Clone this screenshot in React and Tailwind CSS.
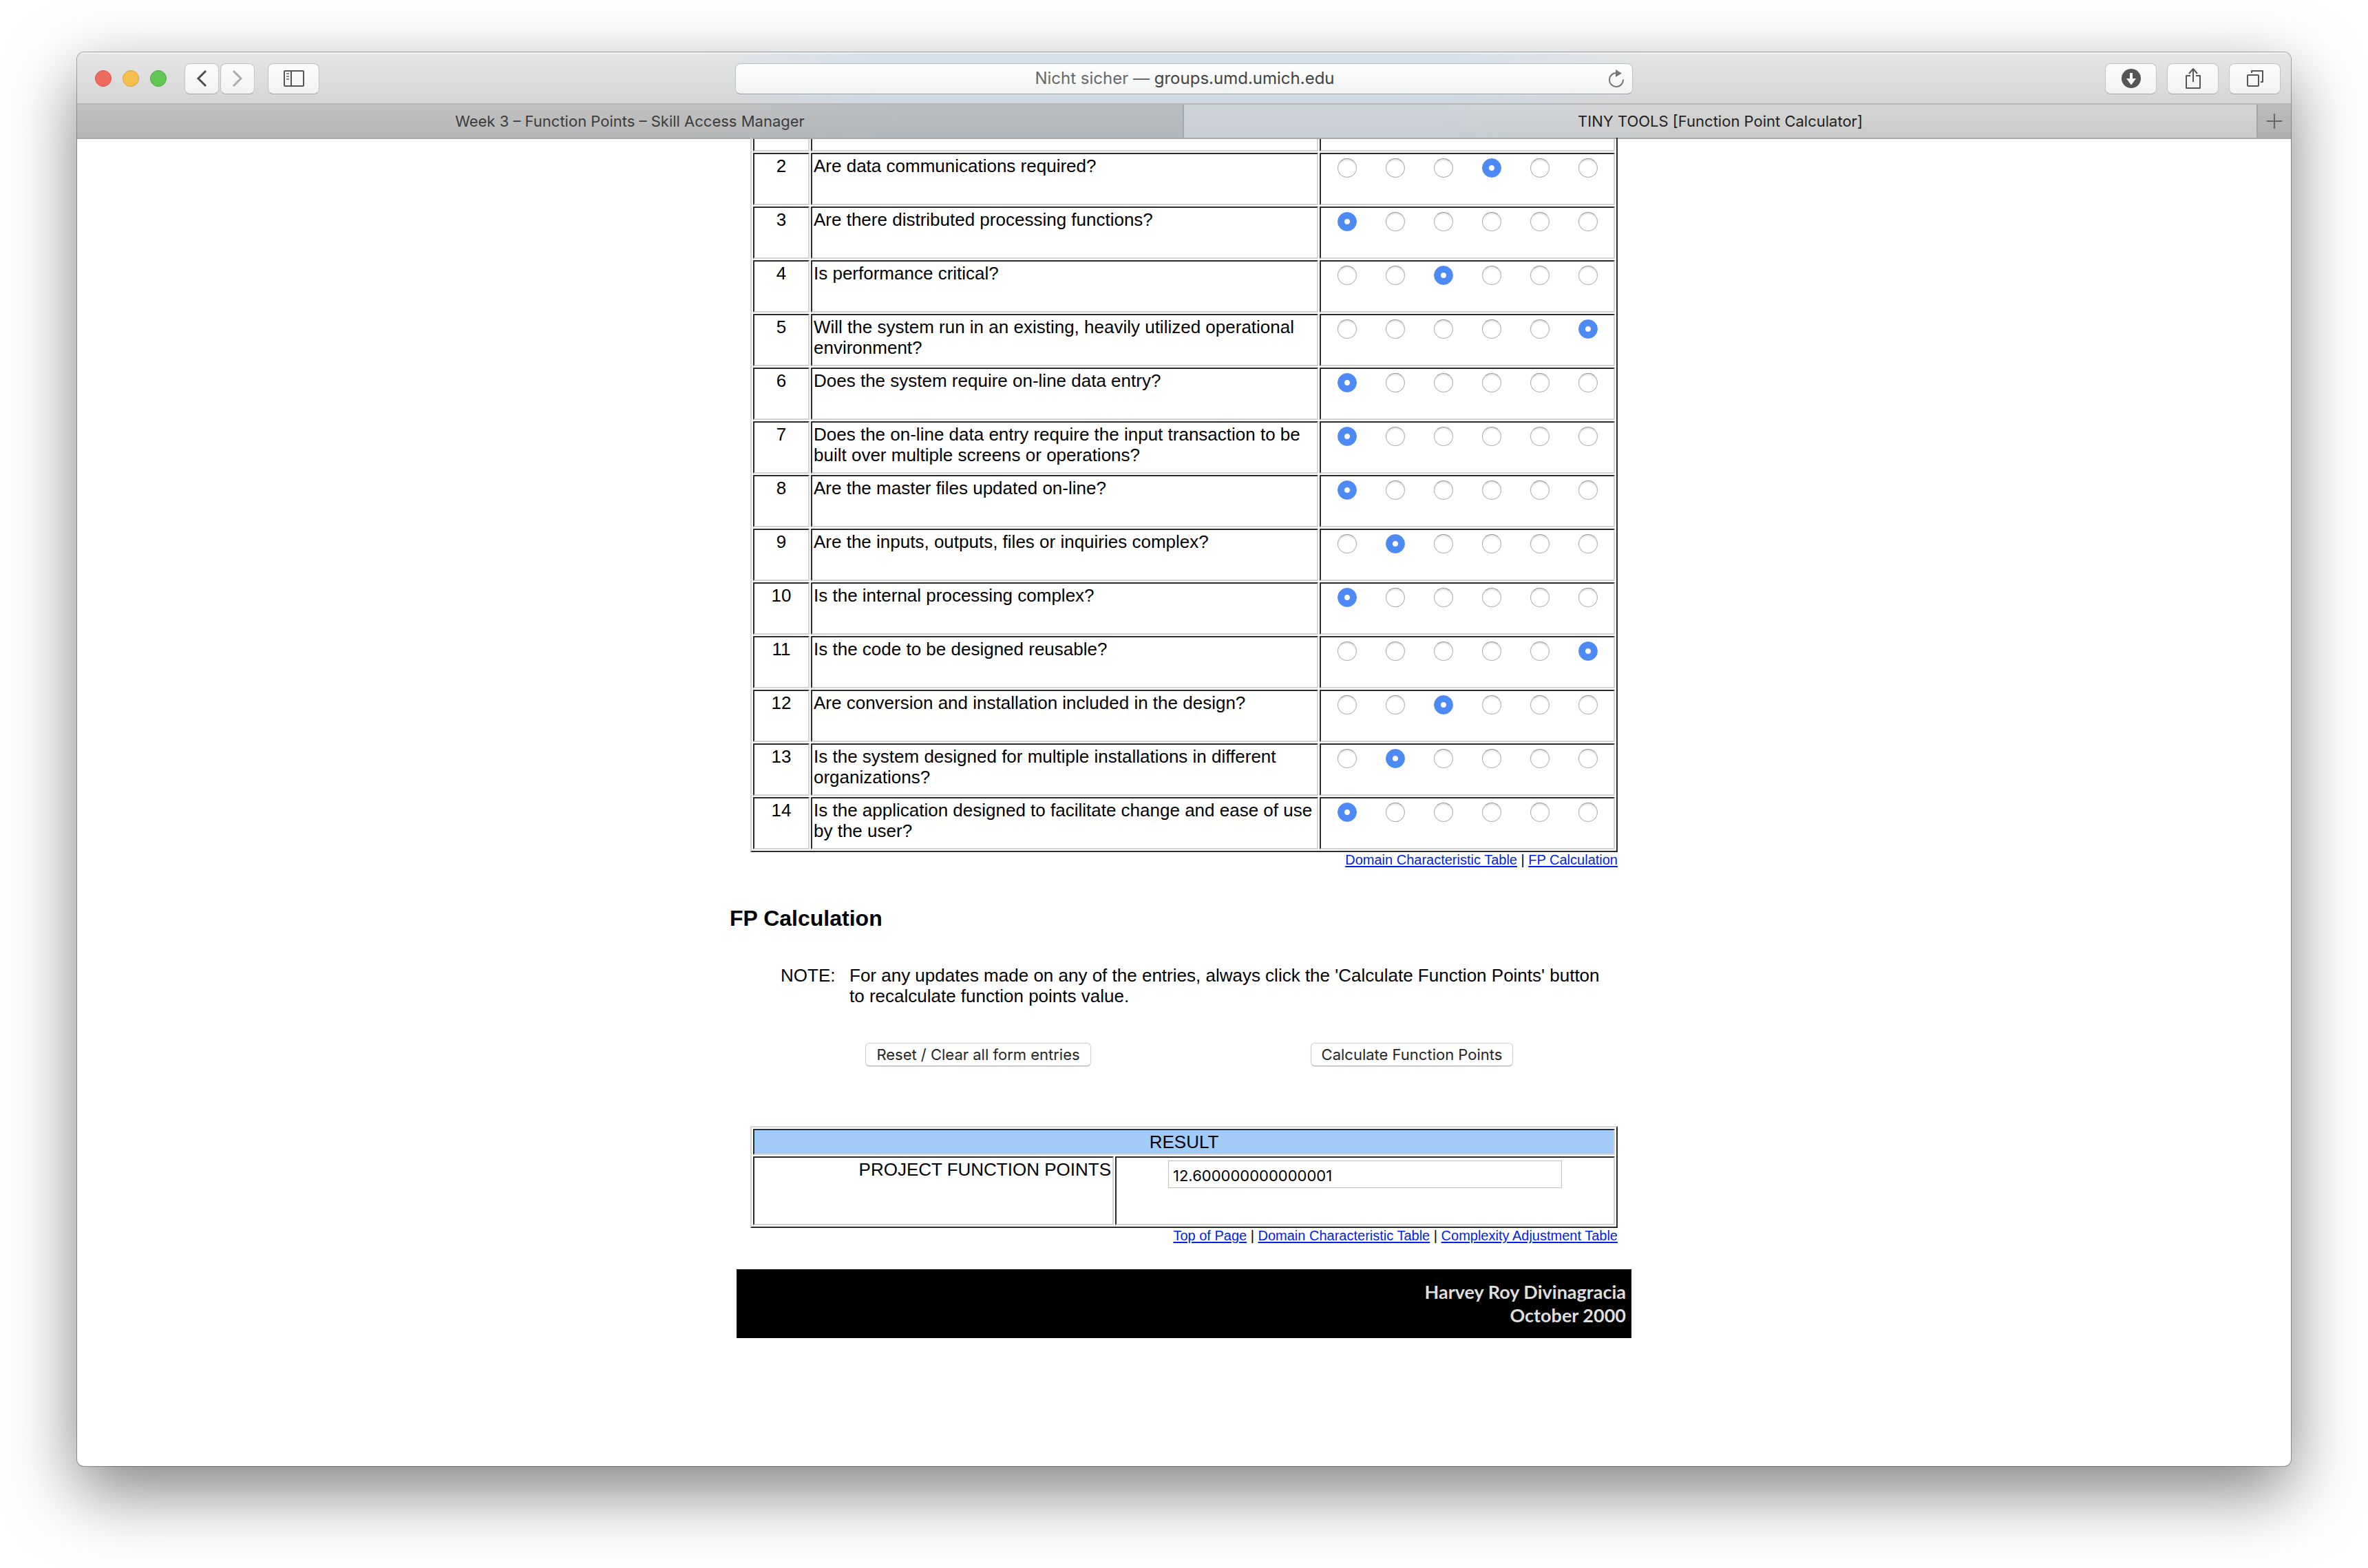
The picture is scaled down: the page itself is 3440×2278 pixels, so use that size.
const questions = [
  [2, 'Are data communications required?', 3],
  [3, 'Are there distributed processing functions?', 0],
  [4, 'Is performance critical?', 2],
  [5, 'Will the system run in an existing, heavily utilized operational environment?', 5],
  [6, 'Does the system require on-line data entry?', 0],
  [7, 'Does the on-line data entry require the input transaction to be built over multiple screens or operations?', 0],
  [8, 'Are the master files updated on-line?', 0],
  [9, 'Are the inputs, outputs, files or inquiries complex?', 1],
  [10, 'Is the internal processing complex?', 0],
  [11, 'Is the code to be designed reusable?', 5],
  [12, 'Are conversion and installation included in the design?', 2],
  [13, 'Is the system designed for multiple installations in different organizations?', 1],
  [14, 'Is the application designed to facilitate change and ease of use by the user?', 0],
];

const cell =
  'border-2 border-t-[#2b2b2b] border-l-[#2b2b2b] border-r-[#d4d4d4] border-b-[#d4d4d4] p-0.5 align-top';
const clippedCell =
  'border-x-2 border-b-2 border-l-[#2b2b2b] border-r-[#d4d4d4] border-b-[#d4d4d4] p-0';
const toolButton =
  'flex h-[45px] items-center justify-center rounded-lg border border-[#c4c4c4] border-b-[#a8a8a8] bg-linear-to-b from-[#fcfcfc] to-[#f2f2f2] text-[#555]';
const formButton =
  "h-[34px] rounded-md border border-[#cfcfcf] border-b-[#b4b4b4] bg-white px-[15px] font-['Inter',sans-serif] text-[22px] leading-[30px] text-[#262626] shadow-[0_1px_1px_rgba(0,0,0,0.12)]";
const link = 'text-[#0022ee] underline underline-offset-2';

function Toolbar() {
  return (
    <header className="flex h-[76px] items-center border-b-2 border-[#b4b4b4] bg-[linear-gradient(90deg,transparent_28%,rgba(200,220,240,0.5)_36%,rgba(200,220,240,0.5)_62%,transparent_71%),linear-gradient(#e6e6e6,#d5d5d5)] px-[15px] pt-0.5 shadow-[inset_0_2px_0_rgba(255,255,255,0.5)]">
      <div className="flex flex-1 items-center">
        <div className="ml-[11px] flex gap-4">
          <button aria-label="Close" className="size-6 rounded-full border border-[#d9544a] bg-[#ee6a5f]" />
          <button aria-label="Minimize" className="size-6 rounded-full border border-[#dba03c] bg-[#f5bf4f]" />
          <button aria-label="Zoom" className="size-6 rounded-full border border-[#4fa73d] bg-[#62c655]" />
        </div>
        <div className="ml-[26px] flex gap-0.5">
          <button aria-label="Back" className={`${toolButton} w-[50px]`}>
            <svg width="16" height="26" viewBox="0 0 16 26" fill="none" stroke="#4c4c4c" strokeWidth="3">
              <path d="M14 2 3 13l11 11" />
            </svg>
          </button>
          <button aria-label="Forward" className={`${toolButton} w-[50px]`}>
            <svg width="16" height="26" viewBox="0 0 16 26" fill="none" stroke="#acacac" strokeWidth="3">
              <path d="m2 2 11 11L2 24" />
            </svg>
          </button>
        </div>
        <button aria-label="Show sidebar" className={`${toolButton} ml-[19px] w-[75px]`}>
          <svg width="30" height="24" viewBox="0 0 30 24" fill="none" stroke="#555" strokeWidth="2">
            <rect x="1" y="1" width="28" height="22" rx="1" />
            <path d="M11 1v22" />
            <path d="M4 5h4M4 9h4M4 13h4" stroke="#888" />
          </svg>
        </button>
      </div>
      <div className="flex h-[45px] w-[1304px] items-center rounded-lg border border-[#bcc4c8] border-b-[#9ca2a4] bg-linear-to-b from-[#fdfefe] to-[#f1f2f2] pr-3 pl-9">
        <div className="flex-1 text-center text-2xl text-[#696969]">
          Nicht sicher — <span className="text-[#444]">groups.umd.umich.edu</span>
        </div>
        <button aria-label="Reload">
          <svg width="22" height="26" viewBox="0 0 22 26" fill="none" stroke="#777" strokeWidth="2">
            <path d="M21 14.500A10 10 0 1 1 11 5" />
            <path d="m10 0 9 5.500-9 5.500z" fill="#777" stroke="none" />
          </svg>
        </button>
      </div>
      <div className="flex flex-1 justify-end gap-[15px]">
        <button aria-label="Downloads" className={`${toolButton} w-[75px]`}>
          <svg width="28" height="28" viewBox="0 0 28 28">
            <circle cx="14" cy="14" r="14" fill="#555" />
            <path d="M12 6h4v8h5l-7 9.500L7 14h5z" fill="#fff" />
          </svg>
        </button>
        <button aria-label="Share" className={`${toolButton} w-[75px]`}>
          <svg width="22" height="30" viewBox="0 0 22 30" fill="none" stroke="#555" strokeWidth="2" strokeLinejoin="round">
            <path d="M7 11H1v18h20V11h-6M11 20V1M5 8l6-7 6 7" />
          </svg>
        </button>
        <button aria-label="Show tabs" className={`${toolButton} w-[75px]`}>
          <svg width="24" height="24" viewBox="0 0 24 24" fill="none" stroke="#555" strokeWidth="2" strokeLinejoin="round">
            <rect x="1" y="7" width="16" height="16" rx="1" />
            <path d="M7 4V1h16v16h-3" />
          </svg>
        </button>
      </div>
    </header>
  );
}

function TabBar() {
  return (
    <nav className="flex h-[50px] border-b-2 border-[#a8a8a8] text-[22px]">
      <button className="w-1/2 border-r-2 border-[#a4a8aa] bg-[linear-gradient(90deg,transparent_55%,rgba(170,185,195,0.4)_75%),linear-gradient(#c1c1c1,#b6b6b6)] text-[#3c3c3c]">
        Week 3 – Function Points – Skill Access Manager
      </button>
      <button className="flex-1 bg-[linear-gradient(90deg,rgba(195,210,220,0.45)_24%,transparent_44%),linear-gradient(#d6d6d6,#cacaca)] text-[#222]">
        TINY TOOLS [Function Point Calculator]
      </button>
      <button aria-label="New tab" className="flex w-[50px] items-center justify-center border-l-2 border-[#a4a4a4] bg-linear-to-b from-[#bcbcbc] to-[#b0b0b0]">
        <svg width="22" height="22" viewBox="0 0 22 22" stroke="#666" strokeWidth="2">
          <path d="M11 0v22M0 11h22" />
        </svg>
      </button>
    </nav>
  );
}

function QuestionTable() {
  return (
    <table className="-mt-0.5 w-full table-fixed border-separate border-spacing-0.5 border-x-2 border-b-2 border-l-[#d4d4d4] border-r-[#2b2b2b] border-b-[#2b2b2b]">
      <colgroup>
        <col className="w-[82px]" />
        <col />
        <col className="w-[429px]" />
      </colgroup>
      <tbody>
        <tr className="h-[18px]">
          <td className={clippedCell} />
          <td className={clippedCell} />
          <td className={clippedCell} />
        </tr>
        {questions.map(([number, text, value]) => (
          <tr key={number} className="h-[76px]">
            <td className={`${cell} text-center`}>{number}</td>
            <td className={cell} id={`question-${number}`}>{text}</td>
            <td className={cell}>
              <div className="flex justify-center gap-[42px] pt-1" role="radiogroup" aria-labelledby={`question-${number}`}>
                {[0, 1, 2, 3, 4, 5].map((score) => (
                  <input
                    key={score}
                    type="radio"
                    name={`factor-${number}`}
                    value={score}
                    aria-label={String(score)}
                    defaultChecked={score === value}
                    className="size-7 appearance-none rounded-full border border-[#b0b0b0] border-t-[#969696] bg-white shadow-[inset_0_2px_2px_rgba(0,0,0,0.12)] checked:border-[#4d8af5] checked:bg-[radial-gradient(circle,#fff_3.5px,#4d8af5_4.5px)] checked:shadow-none"
                  />
                ))}
              </div>
            </td>
          </tr>
        ))}
      </tbody>
    </table>
  );
}

export default function App() {
  return (
    <div className="min-h-screen bg-white px-28 pt-[76px] pb-[148px] font-['Inter',sans-serif]">
      <div className="flex min-h-[2054px] flex-col overflow-hidden rounded-[10px] bg-white shadow-[0_0_0_1px_rgba(0,0,0,0.3),0_36px_100px_rgba(0,0,0,0.5)]">
        <Toolbar />
        <TabBar />
        <main className="mx-auto w-[1320px] font-['Liberation_Sans',Arial,sans-serif] text-[26px] leading-[30px] text-black">
          <section className="mx-[30px]">
            <QuestionTable />
            <p className="text-right text-xl leading-[22px]">
              <a href="#domain" className={link}>Domain Characteristic Table</a> | <a href="#calculation" className={link}>FP Calculation</a>
            </p>
          </section>

          <h2 id="calculation" className="mt-14 text-[32px] leading-9 font-bold">FP Calculation</h2>

          <div className="mt-[50px] mr-[38px] ml-[74px] flex">
            <p className="w-[100px] shrink-0">NOTE:</p>
            <p>For any updates made on any of the entries, always click the 'Calculate Function Points' button to recalculate function points value.</p>
          </div>

          <div className="mt-[53px] mr-[14px] ml-[46px] grid grid-cols-2 justify-items-center">
            <button type="reset" className={formButton}>Reset / Clear all form entries</button>
            <button type="button" className={formButton}>Calculate Function Points</button>
          </div>

          <section className="mx-[30px] mt-[87px]">
            <table className="w-full table-fixed border-separate border-spacing-0.5 border-2 border-t-[#d4d4d4] border-l-[#d4d4d4] border-r-[#2b2b2b] border-b-[#2b2b2b]">
              <colgroup>
                <col className="w-[524px]" />
                <col />
              </colgroup>
              <tbody>
                <tr>
                  <th colSpan={2} className={`${cell} bg-[#a2cbfa] text-center font-normal`}>RESULT</th>
                </tr>
                <tr className="h-[100px]">
                  <td className={`${cell} text-right`}>
                    <label htmlFor="points">PROJECT FUNCTION POINTS</label>
                  </td>
                  <td className={cell}>
                    <input
                      id="points"
                      type="text"
                      defaultValue="12.600000000000001"
                      className="mx-auto mt-0.5 block h-10 w-[572px] border border-[#c0c0c0] bg-white px-1.5 pt-1 font-['Inter',sans-serif] text-[22px]"
                    />
                  </td>
                </tr>
              </tbody>
            </table>
            <p className="text-right text-xl leading-[22px]">
              <a href="#top" className={link}>Top of Page</a> | <a href="#domain" className={link}>Domain Characteristic Table</a> | <a href="#complexity" className={link}>Complexity Adjustment Table</a>
            </p>
          </section>

          <footer className="mx-2.5 mt-[38px] h-[100px] bg-black pt-4 pr-2 text-right font-['Lato',sans-serif] text-[27px] leading-[34px] font-bold text-[#dedede]">
            <p>Harvey Roy Divinagracia</p>
            <p>October 2000</p>
          </footer>
        </main>
      </div>
    </div>
  );
}
